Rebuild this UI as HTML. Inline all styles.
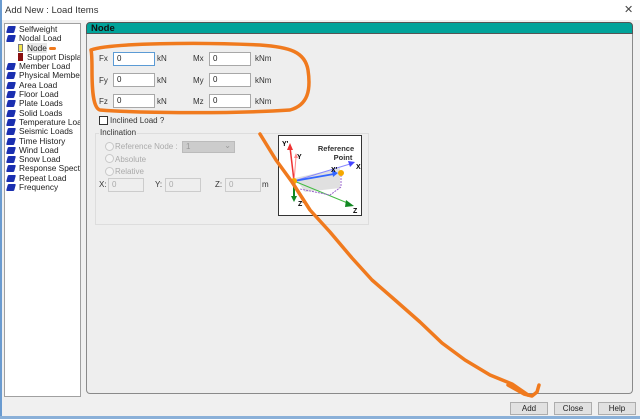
<!DOCTYPE html>
<html><head><meta charset="utf-8"><style>
*{margin:0;padding:0;box-sizing:border-box}
html,body{width:640px;height:419px;overflow:hidden}
body{background:#f0f0f0;font-family:"Liberation Sans",sans-serif;font-size:8px;color:#222;position:relative}
.a{position:absolute}
.inp{position:absolute;background:#fff;border:1px solid #a8a8a8;height:14px;width:42px;padding:1px 3px;font-size:8px}
.inp.f{border-color:#5b9bd5}
.dis{position:absolute;background:#eee;border:1px solid #ccc;height:14px;width:36px;padding:1px 3px;color:#aaa}
.lbl{position:absolute;font-size:8px;color:#333}
.btn{position:absolute;background:#e1e1e1;border:1px solid #adadad;height:13px;width:38px;text-align:center;font-size:8px;line-height:11px}
.tree div{height:9.3px;line-height:9.3px;white-space:nowrap;font-size:8.3px;position:relative;padding-left:14px}
.tree div i{position:absolute;left:2px;top:1px;width:8px;height:7px;background:#1a2fb0;transform:skewX(-15deg);border-radius:1px}
.rad{position:absolute;width:9px;height:9px;border:1px solid #c8c8c8;border-radius:50%;background:#f4f4f4}
</style></head><body>
<div class="a" style="left:0;top:0;width:640px;height:20px;background:#fff"></div>
<div class="a" style="left:5px;top:5px;font-size:9.5px;color:#333">Add New : Load Items</div>
<div class="a" style="left:624px;top:3px;font-size:11px;color:#444">✕</div>
<div class="a" style="left:0;top:0;width:2px;height:419px;background:#6a9bd0"></div>
<div class="a" style="left:0;top:416px;width:640px;height:3px;background:#8ab0d8"></div>

<div class="a tree" style="left:4px;top:23px;width:77px;height:374px;background:#fff;border:1px solid #a0a0a0;overflow:hidden;padding-top:1px">
<div><i></i>Selfweight</div>
<div><i></i>Nodal Load</div>
<div style="padding-left:22px"><span style="position:absolute;left:13px;top:0;width:5px;height:8px;background:#f3e34a;border:1px solid #777"></span><span style="background:#e8e8e8">Node</span> <span style="display:inline-block;width:7px;height:3px;background:#f07a1e;border-radius:2px;vertical-align:middle"></span></div>
<div style="padding-left:22px"><span style="position:absolute;left:13px;top:0;width:5px;height:8px;background:#8a1010"></span>Support Displacement</div>
<div><i></i>Member Load</div>
<div><i></i>Physical Member Load</div>
<div><i></i>Area Load</div>
<div><i></i>Floor Load</div>
<div><i></i>Plate Loads</div>
<div><i></i>Solid Loads</div>
<div><i></i>Temperature Loads</div>
<div><i></i>Seismic Loads</div>
<div><i></i>Time History</div>
<div><i></i>Wind Load</div>
<div><i></i>Snow Load</div>
<div><i></i>Response Spectra</div>
<div><i></i>Repeat Load</div>
<div><i></i>Frequency</div>
<div class="a" style="left:0;top:360px;width:77px;height:12px;background:#f0f0f0;padding:0"><span class="a" style="left:12px;top:1px;width:44px;height:9px;background:#c8c8c8"></span><span class="a" style="left:3px;top:0;font-size:8px">‹</span><span class="a" style="left:68px;top:0;font-size:8px">›</span></div>
</div>

<div class="a" style="left:86px;top:22px;width:547px;height:12px;background:#00a39a;border:1px solid #555;border-radius:4px 4px 0 0"></div>
<div class="a" style="left:91px;top:23px;font-size:9.5px;font-weight:bold;color:#111">Node</div>
<div class="a" style="left:86px;top:34px;width:547px;height:360px;border:1px solid #8a8a8a;border-top:none;border-radius:0 0 4px 4px;background:#eeeeee"></div>

<div class="lbl" style="left:99px;top:54px">Fx</div><div class="inp f" style="left:113px;top:52px">0</div><div class="lbl" style="left:157px;top:54px">kN</div>
<div class="lbl" style="left:193px;top:54px">Mx</div><div class="inp" style="left:209px;top:52px">0</div><div class="lbl" style="left:255px;top:54px">kNm</div>
<div class="lbl" style="left:99px;top:76px">Fy</div><div class="inp" style="left:113px;top:73px">0</div><div class="lbl" style="left:157px;top:76px">kN</div>
<div class="lbl" style="left:193px;top:76px">My</div><div class="inp" style="left:209px;top:73px">0</div><div class="lbl" style="left:255px;top:76px">kNm</div>
<div class="lbl" style="left:99px;top:97px">Fz</div><div class="inp" style="left:113px;top:94px">0</div><div class="lbl" style="left:157px;top:97px">kN</div>
<div class="lbl" style="left:193px;top:97px">Mz</div><div class="inp" style="left:209px;top:94px">0</div><div class="lbl" style="left:255px;top:97px">kNm</div>

<div class="a" style="left:99px;top:116px;width:9px;height:9px;border:1px solid #333;background:#fff"></div>
<div class="lbl" style="left:110px;top:116px">Inclined Load ?</div>

<div class="a" style="left:95px;top:133px;width:274px;height:92px;border:1px solid #ddd"></div>
<div class="lbl" style="left:99px;top:128px;background:#eee;padding:0 1px">Inclination</div>
<div class="rad" style="left:105px;top:142px"></div><div class="lbl" style="left:115px;top:142px;color:#aaa">Reference Node :</div>
<div class="a" style="left:182px;top:141px;width:53px;height:12px;background:#ccc;border:1px solid #bbb;color:#999;padding-left:3px">1<span style="position:absolute;right:3px;top:-1px">⌄</span></div>
<div class="rad" style="left:105px;top:154px"></div><div class="lbl" style="left:115px;top:155px;color:#aaa">Absolute</div>
<div class="rad" style="left:105px;top:167px"></div><div class="lbl" style="left:115px;top:167px;color:#aaa">Relative</div>
<div class="lbl" style="left:99px;top:180px">X:</div><div class="dis" style="left:108px;top:178px">0</div>
<div class="lbl" style="left:155px;top:180px">Y:</div><div class="dis" style="left:165px;top:178px">0</div>
<div class="lbl" style="left:215px;top:180px">Z:</div><div class="dis" style="left:225px;top:178px">0</div>
<div class="lbl" style="left:262px;top:180px">m</div>

<svg class="a" style="left:0;top:0" width="640" height="419">
<rect x="278.5" y="135.5" width="83" height="80" fill="#fff" stroke="#333"/>
<text x="336" y="151" font-size="7.5" font-weight="bold" text-anchor="middle" font-family="Liberation Sans" fill="#333">Reference</text>
<text x="343" y="160" font-size="7.5" font-weight="bold" text-anchor="middle" font-family="Liberation Sans" fill="#333">Point</text>
<polygon points="295,178 340,168 340,188 305,192" fill="#ccc" opacity=".6"/>
<line x1="294" y1="181" x2="290" y2="147" stroke="#e33" stroke-width="1.5"/><polygon points="290,143 287,150 293,150" fill="#e33"/>
<line x1="294" y1="181" x2="296" y2="157" stroke="#f88"/><polygon points="296,153 294,158 298,158" fill="#f88"/>
<line x1="294" y1="181" x2="350" y2="164" stroke="#88f"/><polygon points="355,162 348,161 350,167" fill="#44f"/>
<line x1="294" y1="181" x2="334" y2="174" stroke="#36f" stroke-width="1.8"/><polygon points="338,173 332,170 333,177" fill="#36f"/>
<line x1="294" y1="181" x2="350" y2="204" stroke="#4b4"/><polygon points="354,206 346,200 345,207" fill="#182"/>
<line x1="294" y1="181" x2="294" y2="198" stroke="#182" stroke-width="2"/><polygon points="294,202 291,196 297,196" fill="#182"/>
<polyline points="341,175 341,187 330,195 300,189" fill="none" stroke="#96c" stroke-dasharray="2,1"/>
<circle cx="341" cy="173" r="3" fill="#f5a800"/><circle cx="294" cy="181" r="3" fill="#f5a800"/>
<text x="282" y="146" font-size="7" font-weight="bold" font-family="Liberation Sans">Y'</text>
<text x="297" y="159" font-size="7" font-weight="bold" font-family="Liberation Sans">Y</text>
<text x="331" y="172" font-size="7" font-weight="bold" font-family="Liberation Sans">X'</text>
<text x="356" y="169" font-size="7" font-weight="bold" font-family="Liberation Sans">X</text>
<text x="298" y="206" font-size="7" font-weight="bold" font-family="Liberation Sans">Z'</text>
<text x="353" y="213" font-size="7" font-weight="bold" font-family="Liberation Sans">Z</text>
<g fill="none" stroke="#f07a1e" stroke-width="3.5" stroke-linecap="round" stroke-linejoin="round">
<path d="M91,50 C110,43 200,42 260,45 C290,47 305,52 308,70 C311,90 308,105 290,110 C230,114 140,113 100,110 C93,108 92,90 92,70 C92,60 92,54 91,50"/>
<path d="M260,134 L276,160 L292,182 L310,210 L330,232 L352,258 L372,280 L395,300 L420,322 L442,343 L465,360 L490,375 L512,384 L528,395"/>
<path d="M508,385 L524,394 L532,396 L537,392 L539,385"/>
</g>
</svg>

<div class="btn" style="left:510px;top:402px">Add</div>
<div class="btn" style="left:554px;top:402px">Close</div>
<div class="btn" style="left:598px;top:402px">Help</div>
</body></html>
